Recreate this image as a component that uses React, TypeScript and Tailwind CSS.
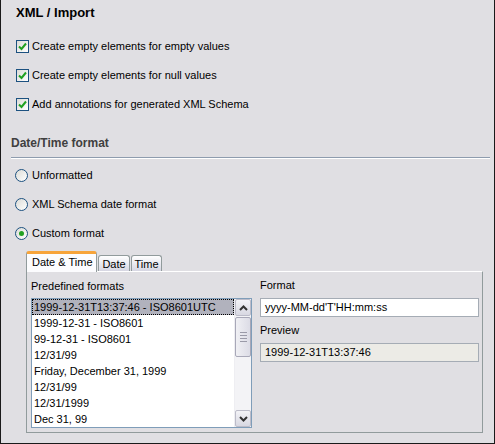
import React from 'react';

const font = { fontFamily: 'Tahoma, "Liberation Sans", Arial, sans-serif' };

const formats = [
  '1999-12-31T13:37:46 - ISO8601UTC',
  '1999-12-31 - ISO8601',
  '99-12-31 - ISO8601',
  '12/31/99',
  'Friday, December 31, 1999',
  '12/31/99',
  '12/31/1999',
  'Dec 31, 99',
];

const CheckBox: React.FC<{ label: string }> = ({ label }) => (
  <div className="flex items-center h-[14px] pl-[15px]">
    <span className="flex items-center justify-center w-[13px] h-[13px] border border-[#1c5180] bg-gradient-to-br from-[#dcdcd7] to-white">
      <svg width="9" height="9" viewBox="0 0 9 9">
        <path d="M1 4.5 L3.5 7 L8 1.5" fill="none" stroke="#21a121" strokeWidth="2" />
      </svg>
    </span>
    <span className="ml-[3px] text-[11px] text-black leading-[14px]">{label}</span>
  </div>
);

const Radio: React.FC<{ label: string; checked?: boolean }> = ({ label, checked }) => (
  <div className="flex items-center h-[14px] pl-[14px]">
    <span className="flex items-center justify-center w-[13px] h-[13px] rounded-full border border-[#1c5180] bg-gradient-to-br from-[#dcdcd7] to-white">
      {checked && <span className="w-[5px] h-[5px] rounded-full bg-[#21a121]" />}
    </span>
    <span className="ml-[4px] text-[11px] text-black leading-[14px]">{label}</span>
  </div>
);

const Chevron: React.FC<{ up?: boolean }> = ({ up }) => (
  <svg width="9" height="6" viewBox="0 0 9 6">
    <path d={up ? 'M1 5 L4.5 1.5 L8 5' : 'M1 1 L4.5 4.5 L8 1'} fill="none" stroke="#333" strokeWidth="2" />
  </svg>
);

export default function App() {
  return (
    <div style={font} className="w-[495px] h-[444px] bg-[#e0dfe3] border-l border-r border-b border-[#1a1a1a] overflow-hidden">
      <div className="pl-[15px] pt-[5px] text-[13px] font-bold leading-[16px] text-black">XML / Import</div>

      <div className="mt-[18px] flex flex-col gap-[15px]">
        <CheckBox label="Create empty elements for empty values" />
        <CheckBox label="Create empty elements for null values" />
        <CheckBox label="Add annotations for generated XML Schema" />
      </div>

      <div className="mt-[25px] pl-[10px] text-[12px] font-bold leading-[14px] text-[#404040]">Date/Time format</div>
      <div className="mt-[7px] ml-[10px] mr-[4px] h-[2px] border-t border-[#8e9cae] bg-white" />

      <div className="mt-[9px] flex flex-col gap-[15px]">
        <Radio label="Unformatted" />
        <Radio label="XML Schema date format" />
        <Radio label="Custom format" checked />
      </div>

      <div className="mt-[11px] ml-[25px] mr-[11px]">
        <div className="flex items-end h-[20px]">
          <div className="relative z-10 h-[21px] -mb-px w-[71px] bg-[#fcfcfe] border-x border-[#919b9c] rounded-t-[3px] border-t-[3px] border-t-[#f7a43a] text-[11px] leading-[16px] pl-[5px] text-black">
            Date &amp; Time
          </div>
          <div className="h-[16px] w-[32px] ml-px border border-b-0 border-[#919b9c] rounded-t-[3px] bg-gradient-to-b from-white to-[#d6d6e2] text-[11px] leading-[16px] text-center text-black">
            Date
          </div>
          <div className="h-[16px] w-[31px] ml-px border border-b-0 border-[#919b9c] rounded-t-[3px] bg-gradient-to-b from-white to-[#d6d6e2] text-[11px] leading-[16px] text-center text-black">
            Time
          </div>
        </div>

        <div className="h-[162px] border border-[#919b9c] border-t-white bg-[#e0dfe3] flex pl-[4px] pr-[3px]">
          <div className="w-[221px] flex flex-col">
            <div className="h-[26px] text-[11px] leading-[14px] pt-[7px] text-black">Predefined formats</div>
            <div className="h-[130px] border border-[#7f9db9] bg-white flex">
              <div className="flex-1 flex flex-col">
                {formats.map((f, i) => (
                  <div
                    key={i}
                    className={
                      i === 0
                        ? 'h-[16px] text-[11px] leading-[14px] px-px bg-[#b1b2bd] border border-dotted border-black whitespace-nowrap'
                        : 'h-[16px] text-[11px] leading-[16px] px-[2px] whitespace-nowrap'
                    }
                  >
                    {f}
                  </div>
                ))}
              </div>
              <div className="w-[17px] flex flex-col bg-[#f3f3f6] border-l border-[#eeeef2]">
                <div className="h-[17px] flex items-center justify-center border border-[#bcbcc9] rounded-[2px] bg-gradient-to-b from-[#f3f3f7] to-[#d8d8e2]">
                  <Chevron up />
                </div>
                <div className="mt-px h-[40px] flex flex-col items-center justify-center gap-[2px] border border-[#a8a8b8] rounded-[2px] bg-gradient-to-r from-[#f0f0f4] to-[#dcdce6]">
                  <span className="w-[7px] h-px bg-[#9a9aa8]" />
                  <span className="w-[7px] h-px bg-[#9a9aa8]" />
                  <span className="w-[7px] h-px bg-[#9a9aa8]" />
                  <span className="w-[7px] h-px bg-[#9a9aa8]" />
                </div>
                <div className="flex-1" />
                <div className="h-[17px] flex items-center justify-center border border-[#bcbcc9] rounded-[2px] bg-gradient-to-b from-[#f3f3f7] to-[#d8d8e2]">
                  <Chevron />
                </div>
              </div>
            </div>
          </div>

          <div className="ml-[8px] flex-1 flex flex-col">
            <div className="h-[26px] text-[11px] leading-[14px] pt-[6px] text-black">Format</div>
            <div className="h-[19px] border border-[#a5acb5] bg-white text-[11px] leading-[17px] px-[4px] text-black">
              yyyy-MM-dd'T'HH:mm:ss
            </div>
            <div className="h-[26px] text-[11px] leading-[14px] pt-[6px] text-black">Preview</div>
            <div className="h-[19px] border border-[#a5acb5] bg-[#ecebe6] text-[11px] leading-[17px] px-[4px] text-black">
              1999-12-31T13:37:46
            </div>
          </div>
        </div>
      </div>
    </div>
  );
}
